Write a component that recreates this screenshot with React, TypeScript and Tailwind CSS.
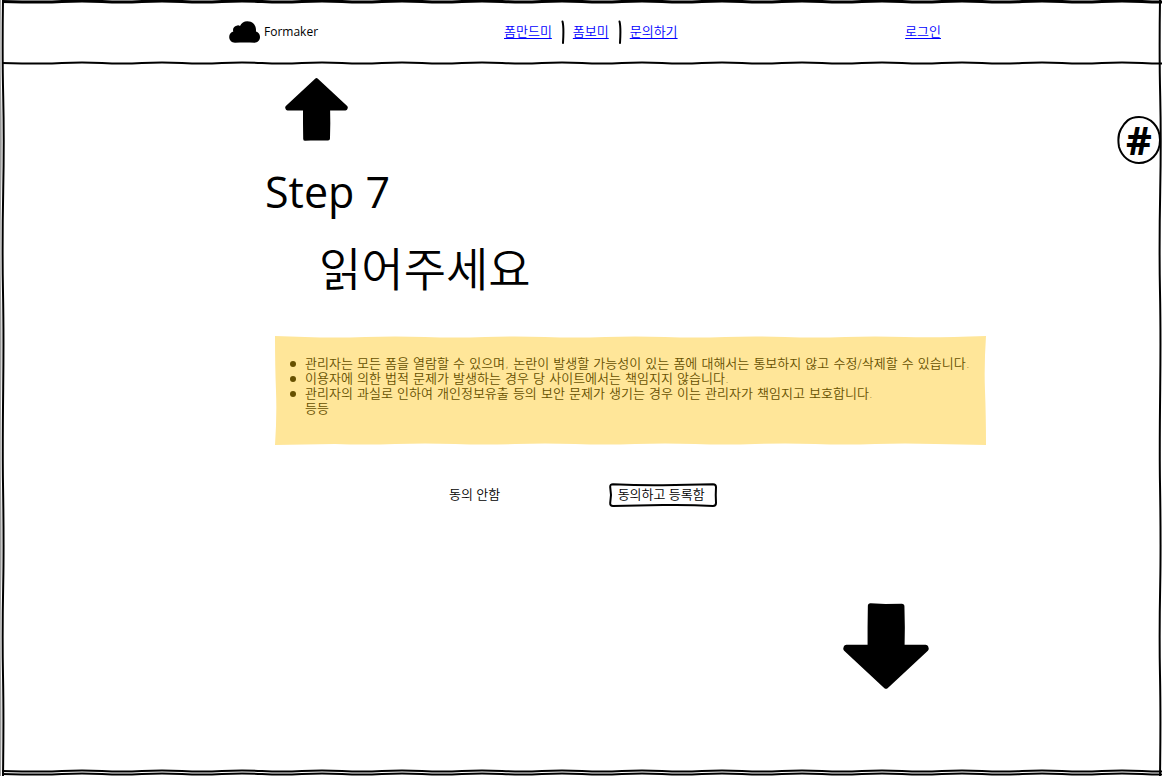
import React from "react";

function wave(length: number, center: number, amplitude: number, step: number) {
  let d = "";
  for (let p = 0, i = 0; p <= length; p += step, i++) {
    const offset = center + (i % 2 ? amplitude : -amplitude);
    d += i === 0 ? `M0 ${center}` : `S${p - step / 2} ${offset} ${p} ${offset}`;
  }
  return d;
}

function HorizontalStroke({ className = "" }: { className?: string }) {
  return (
    <svg
      aria-hidden="true"
      viewBox="0 0 1160 4"
      preserveAspectRatio="none"
      className={`block h-1 w-full overflow-visible ${className}`}
    >
      <path
        d={wave(1160, 2, 0.5, 40)}
        fill="none"
        stroke="#000"
        strokeWidth="2"
        vectorEffect="non-scaling-stroke"
      />
    </svg>
  );
}

function VerticalStroke({ className = "" }: { className?: string }) {
  return (
    <svg
      aria-hidden="true"
      viewBox="0 0 4 770"
      preserveAspectRatio="none"
      className={`pointer-events-none absolute top-0 h-full w-1 overflow-visible ${className}`}
    >
      <path
        d="M2 0C1.4 40 1.6 70 2.2 95S2.8 160 2.2 190S1.4 260 2 290S2.6 350 2.2 385S1.5 450 2 480S2.8 550 2.2 580S1.4 640 2 670S2.6 730 2 770"
        fill="none"
        stroke="currentColor"
        strokeWidth="2"
        vectorEffect="non-scaling-stroke"
      />
    </svg>
  );
}

function CloudIcon() {
  return (
    <svg aria-hidden="true" viewBox="0 0 31 22" className="h-[22px] w-[31px] shrink-0">
      <path d="M6 21.7C2.500 21.700 .2 19 .2 16C.2 13.200 1.800 11.300 4.300 10.600C3.200 7.500 5.300 4.600 8.500 4.400C9.600 4.300 10.300 4.500 11 4.900C12.400 2 15 .3 18.300 .3C23.500 .3 27.200 4 27 9.500C26.900 10 27 10.300 27 10.600C29.400 11.300 31 13.300 31 16C31 19.300 28.600 21.700 25.500 21.700C19 21.300 12 21.400 6 21.700Z" />
    </svg>
  );
}

function ArrowIcon({ className = "" }: { className?: string }) {
  return (
    <svg aria-hidden="true" viewBox="0 0 63 63" className={className}>
      <path
        d="M31.500 2.200L60.800 29.500L60.500 30.500L43.100 30.500L43.300 45L43 60.500L31 60.200L20.200 60.800L20 45L20 30.500L2.500 30.500L2.200 29.500Z"
        stroke="#000"
        strokeWidth="4"
        strokeLinejoin="round"
      />
    </svg>
  );
}

function Divider() {
  return (
    <svg aria-hidden="true" viewBox="0 0 5 24" className="h-6 w-[5px]">
      <path d="M2.500 1.500C3.700 6 3.500 15 3 23" fill="none" stroke="#000" strokeWidth="2" strokeLinecap="round" />
    </svg>
  );
}

const notices = [
  "관리자는 모든 폼을 열람할 수 있으며, 논란이 발생할 가능성이 있는 폼에 대해서는 통보하지 않고 수정/삭제할 수 있습니다.",
  "이용자에 의한 법적 문제가 발생하는 경우 당 사이트에서는 책임지지 않습니다.",
  "관리자의 과실로 인하여 개인정보유출 등의 보안 문제가 생기는 경우 이는 관리자가 책임지고 보호합니다.",
];

const linkStyle = "pb-0.5 text-[#0000ff] underline underline-offset-2";

export default function App() {
  return (
    <div className="relative flex min-h-screen flex-col overflow-hidden bg-white px-0.5 font-['Open_Sans','Noto_Sans_CJK_KR',sans-serif] text-[13px] leading-[15px] font-[350] text-black">
      <VerticalStroke className="-left-0.5 text-[#9a9a9a]" />
      <VerticalStroke className="left-px" />
      <VerticalStroke className="right-0.5" />

      <header>
        <HorizontalStroke className="-mt-px" />
        <HorizontalStroke className="-mt-[3px]" />
        <div className="mx-auto grid h-14 max-w-[718px] grid-cols-[275px_1fr_auto] items-center pl-1.5">
          <a href="#home" className="flex items-center gap-1 text-[12px]">
            <CloudIcon />
            <span className="pb-0.5 font-normal">Formaker</span>
          </a>
          <nav className="flex items-center gap-2">
            <a href="#make" className={linkStyle}>폼만드미</a>
            <Divider />
            <a href="#view" className={linkStyle}>폼보미</a>
            <Divider />
            <a href="#contact" className={linkStyle}>문의하기</a>
          </nav>
          <a href="#login" className={linkStyle}>로그인</a>
        </div>
        <HorizontalStroke className="mt-px" />
      </header>

      <main className="flex-1 pl-[263px] pr-[176px]">
        <button type="button" aria-label="이전 단계" className="mt-[13px] ml-5 block">
          <ArrowIcon className="size-[63px]" />
        </button>

        <h1 className="mt-[19px] text-[43px] leading-[64px] font-normal">Step 7</h1>
        <h2 className="mt-3 ml-[54px] text-[46px] leading-[64px]">읽어주세요</h2>

        <section className="relative mt-9 ml-2.5 pt-5 pr-3 pb-[29px] pl-[30px] font-['DejaVu_Sans','Noto_Sans_CJK_KR',sans-serif] text-[#665000]">
          <svg
            aria-hidden="true"
            viewBox="0 0 711 109"
            preserveAspectRatio="none"
            className="absolute inset-0 h-full w-full"
          >
            <path
              fill="#ffe699"
              d="M0 0L30 1Q60 2 90 1T150 1T210 1T270 1T330 1T390 1T450 1T510 1T570 1T630 1T711 0Q709 30 710 55T711 109L660 108Q630 107 600 108T540 108T480 108T420 108T360 108T300 108T240 108T180 108T120 108T60 108L0 109Q2 80 1 55T0 0Z"
            />
          </svg>
          <ul className="relative list-none">
            {notices.map((notice) => (
              <li key={notice} className="relative before:absolute before:top-[5px] before:-left-[15px] before:size-1.5 before:rounded-full before:bg-[#665000]">
                {notice}
              </li>
            ))}
          </ul>
          <p className="relative">등등</p>
        </section>

        <div className="mt-[38px] ml-[184px] flex items-center gap-[109px]">
          <button type="button" className="pb-0.5">동의 안함</button>
          <button type="button" className="relative h-6 w-[108px] pr-1 pb-0.5">
            <svg
              aria-hidden="true"
              viewBox="0 0 108 24"
              preserveAspectRatio="none"
              className="absolute inset-0 h-full w-full"
            >
              <path
                d="M4 1.200Q30 2.500 54 2.200T104 1.200Q107 1.200 107 4Q106.500 12 107 20Q107 23 104 23Q80 21.500 54 22T4 23Q1 23 1.200 20Q2.800 12 1.200 4Q1 1.200 4 1.200Z"
                fill="none"
                stroke="#000"
                strokeWidth="2"
              />
            </svg>
            <span className="relative">동의하고 등록함</span>
          </button>
        </div>

        <button type="button" aria-label="다음 단계" className="mt-24 mr-[57px] ml-auto block">
          <ArrowIcon className="size-[86px] -scale-y-100" />
        </button>
      </main>

      <button type="button" aria-label="태그" className="absolute top-[116px] right-[3px] flex h-12 w-11 items-center justify-center">
        <svg aria-hidden="true" viewBox="0 0 44 48" className="absolute inset-0 h-full w-full">
          <path
            d="M22 1C12 1 8 6 4 13C1 18 1 25 2 31C5 41 13 47 22 47C33 47 43 38 43 24C43 10 33 1 22 1Z"
            fill="#fff"
            stroke="#000"
            strokeWidth="2"
          />
        </svg>
        <span className="relative text-[40px] leading-none font-bold">#</span>
      </button>

      <footer>
        <HorizontalStroke />
        <HorizontalStroke className="-mt-px" />
      </footer>
    </div>
  );
}
